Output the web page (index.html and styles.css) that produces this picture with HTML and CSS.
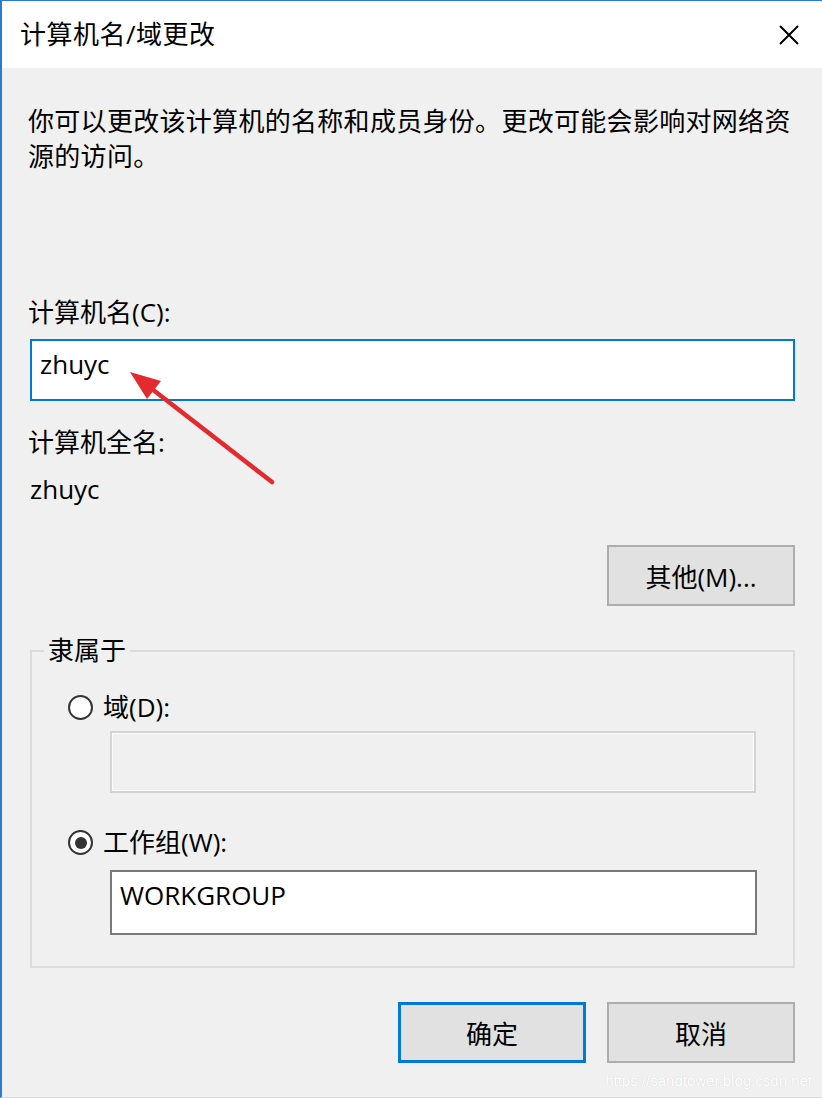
FILE: index.html
```html
<!DOCTYPE html>
<html lang="zh-CN">
<head>
    <meta charset="UTF-8">
    <meta name="viewport" content="width=device-width, initial-scale=1.0">
    <title>计算机名/域更改</title>
    <link rel="stylesheet" href="styles.css">
</head>
<body>

    <div class="window">
        <div class="titlebar">
            <span class="title">计算机名/域更改</span>
            <svg class="close" width="22" height="22" viewBox="0 0 22 22">
                <path d="M2 2 L20 20 M20 2 L2 20" stroke="#000" stroke-width="2" fill="none"/>
            </svg>
        </div>

        <div class="content">
            <p class="desc">你可以更改该计算机的名称和成员身份。更改可能会影响对网络资源的访问。</p>

            <div class="label name-label">计算机名(C):</div>
            <div class="textbox focused">zhuyc</div>

            <div class="label full-label">计算机全名:</div>
            <div class="full-name">zhuyc</div>

            <div class="more-row">
                <button class="btn">其他(M)...</button>
            </div>

            <fieldset class="member">
                <legend>隶属于</legend>

                <div class="radio-row">
                    <span class="radio"></span>
                    <span>域(D):</span>
                </div>
                <div class="textbox disabled"></div>

                <div class="radio-row second">
                    <span class="radio checked"></span>
                    <span>工作组(W):</span>
                </div>
                <div class="textbox group">WORKGROUP</div>
            </fieldset>

            <div class="actions">
                <button class="btn default">确定</button>
                <button class="btn">取消</button>
            </div>
        </div>

        <!-- red pointer drawn over the dialog -->
        <svg class="arrow" width="822" height="1098" viewBox="0 0 822 1098">
            <line x1="272" y1="482" x2="152" y2="389" stroke="#e52a2f" stroke-width="4.5" stroke-linecap="round"/>
            <polygon points="130,372 161,381 147,399" fill="#e52a2f"/>
        </svg>

        <div class="watermark">https://sandtower.blog.csdn.net</div>
    </div>

</body>
</html>
```

FILE: styles.css
```css
* {
    margin: 0;
    padding: 0;
    box-sizing: border-box;
}
body {
    font-family: "Open Sans", "Noto Sans CJK SC", sans-serif;
    font-size: 26px;
    line-height: 35px;
    color: #000;
    background: #f0f0f0;
}
.window {
    position: relative;
    width: 822px;
    height: 1098px;
    background: #f0f0f0;
    border-left: 2px solid #2a7bd3;
    border-top: 1px solid #2a7bd3;
    border-bottom: 1px solid #dadada;
    overflow: hidden;
}
.titlebar {
    height: 67px;
    background: #fff;
    display: flex;
    align-items: center;
    justify-content: space-between;
    padding: 0 22px 0 18px;
}
.title {
    font-size: 26px;
    letter-spacing: 0.5px;
}
.content {
    padding: 0 27px 0 26px;
}
.desc {
    margin-top: 36px;
    width: 780px;
    letter-spacing: 0.3px;
}
.name-label {
    margin-top: 121px;
}
.textbox {
    height: 62px;
    margin-left: 2px;
    padding: 6px 8px 0;
    border: 2px solid #7a7a7a;
    background: #fff;
}
.textbox.focused {
    margin-top: 9px;
    border-color: #0078d7;
}
.full-label {
    margin-top: 24px;
}
.full-name {
    margin-top: 12px;
    padding-left: 2px;
}
.more-row {
    display: flex;
    justify-content: flex-end;
    margin-top: 38px;
}
.btn {
    width: 188px;
    height: 61px;
    font-family: inherit;
    font-size: 26px;
    color: #000;
    background: #e1e1e1;
    border: 2px solid #adadad;
}
.btn.default {
    border: 3px solid #0078d7;
}
.member {
    margin: 27px 0 0 2px;
    padding: 22px 0 31px 36px;
    border: 2px solid #dcdcdc;
}
.member legend {
    margin-left: -24px;
    padding: 0 4px;
}
.radio-row {
    display: flex;
    align-items: center;
    gap: 10px;
}
.radio-row.second {
    margin-top: 32px;
}
.radio {
    width: 25px;
    height: 25px;
    border: 2px solid #333;
    border-radius: 50%;
    background: #fff;
    display: flex;
    align-items: center;
    justify-content: center;
}
.radio.checked::after {
    content: "";
    width: 12px;
    height: 12px;
    border-radius: 50%;
    background: #333;
}
.textbox.disabled {
    margin: 6px 37px 0 42px;
    background: #f0f0f0;
    border-color: #d3d3d3;
    box-shadow: inset 0 0 0 1px #fbfbfb;
}
.textbox.group {
    height: 65px;
    margin: 10px 36px 0 42px;
    padding-left: 8px;
}
.actions {
    display: flex;
    justify-content: flex-end;
    gap: 21px;
    margin-top: 34px;
}
.arrow {
    position: absolute;
    left: -2px;
    top: -1px;
    pointer-events: none;
}
.watermark {
    position: absolute;
    right: 10px;
    bottom: 7px;
    font-family: "Liberation Sans", sans-serif;
    font-size: 15px;
    line-height: 18px;
    color: #fff;
    text-shadow: 0 0 1px #c8c8c8;
}
```
